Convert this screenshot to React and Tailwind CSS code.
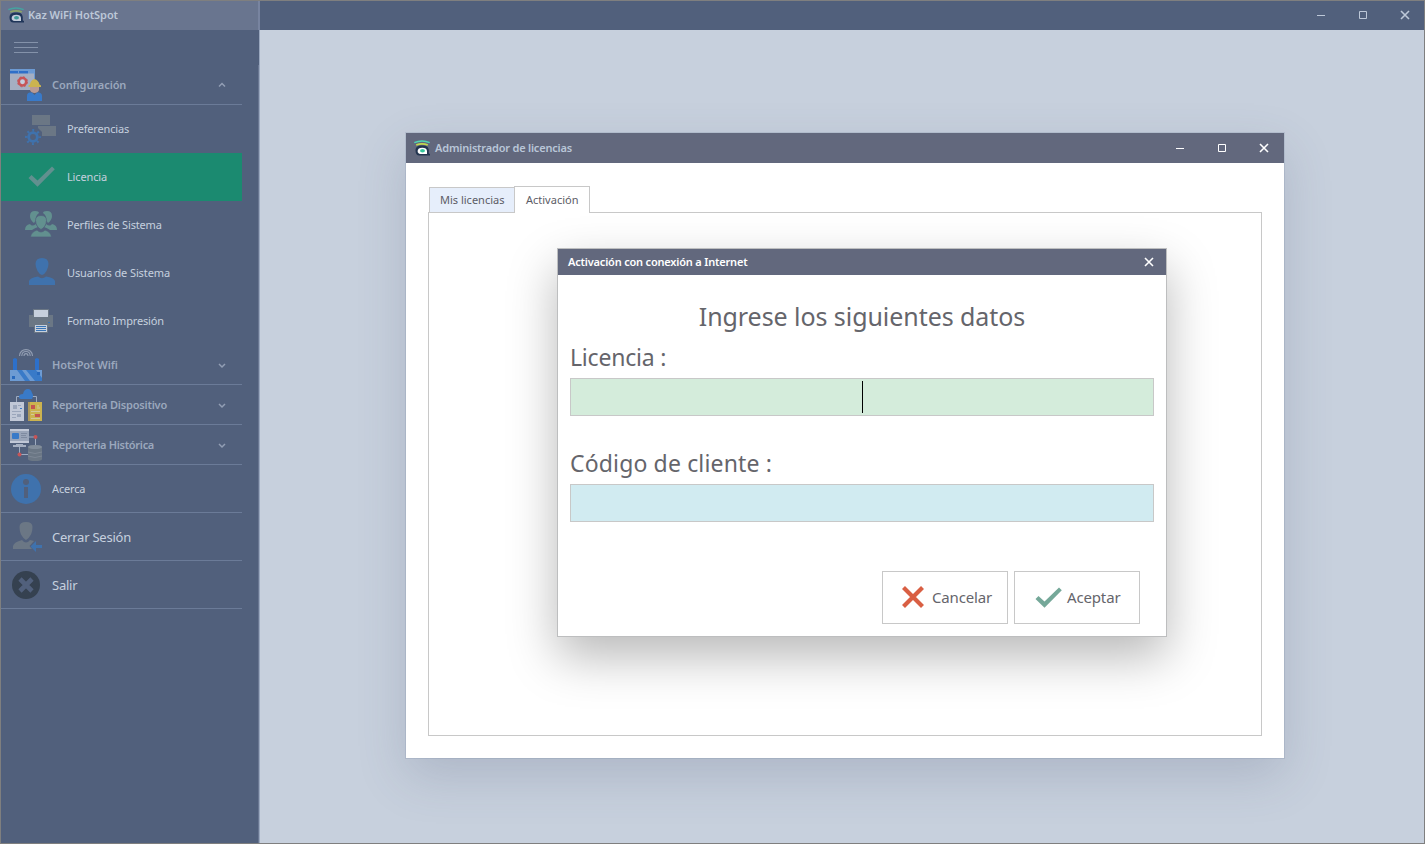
import React from "react";

function KazLogo({ dim = false }) {
  const c = dim
    ? { a: "#45a3a0", b: "#8da568", body: "#1f3559", w: "#c3ccda", dot: "#3f9a98" }
    : { a: "#4fd6b6", b: "#c3d84e", body: "#22344f", w: "#ffffff", dot: "#35c79c" };
  return (
    <svg className="h-4 w-4 shrink-0" viewBox="0 0 16 16" fill="none">
      <path d="M1.500 10.500C1.500 6.500 4.500 5.500 8 5.500S14.200 6 14.800 10V13.500L16 14V15.500H5.500C2.800 15.500 1.500 13.500 1.500 10.500Z" fill={c.body} />
      <path d="M.3 2.600Q8-.6 15.700 2.600" stroke={c.a} strokeWidth="1.500" />
      <path d="M2.200 5Q8 2.600 13.800 5" stroke={c.b} strokeWidth="1.700" />
      <path d="M3.600 11.100C3.600 8.800 5.500 7.700 8.300 7.700S12.800 8.700 13 11V14H6.500C4.500 14 3.600 12.700 3.600 11.100Z" fill={c.w} />
      <ellipse cx="8.500" cy="10.700" rx="2.500" ry="1.700" fill={c.dot} />
    </svg>
  );
}

function ConfigIcon() {
  return (
    <svg className="h-8 w-8" viewBox="0 0 32 32">
      <path d="M0 0H25V21H0Z" fill="#a5afc2" />
      <path d="M0 0H25V2H0Z" fill="#6c9ad3" />
      <path d="M0 2H18V4.500H0Z" fill="#2f6fc8" />
      <path d="M18 2H25V21H24V4.500H18Z" fill="#6c9ad3" />
      <path d="M8 2H9V4.500H8Z" fill="#6c9ad3" />
      <circle cx="12.500" cy="12.800" r="3.700" fill="#c5cddd" stroke="#c65457" strokeWidth="2.500" />
      <circle cx="12.500" cy="12.800" r="5" fill="none" stroke="#c65457" strokeWidth="1" strokeDasharray="2 1.930" />
      <path d="M20 17H29V21Q28 24 24.500 24T20 21Z" fill="#b99a94" />
      <path d="M18.500 18V16.500L20 15.500Q20.500 11 24.500 10Q28.500 11 29.500 15.500L31 16.500V18Z" fill="#cbb34f" />
      <path d="M17 32V27Q17 23.500 20 23.500H22L24.500 26L27 23.500H29Q32 24 32 27V32Z" fill="#397ac9" />
    </svg>
  );
}

function PreferencesIcon() {
  return (
    <svg className="h-8 w-8" viewBox="0 0 32 32">
      <path d="M7 2H25V12H7ZM13 13H31V23H17V19L13 15Z" fill="#6b7785" />
      <circle cx="8" cy="24" r="4.300" fill="#51607c" stroke="#3f72ad" strokeWidth="2.800" />
      <circle cx="8" cy="24" r="6.700" fill="none" stroke="#3f72ad" strokeWidth="2.600" strokeDasharray="1.900 3.362" strokeDashoffset=".95" />
    </svg>
  );
}

function CheckIcon({ color }) {
  return (
    <svg className="h-8 w-8 shrink-0" viewBox="0 0 32 32">
      <path d="M3.500 17L6.500 14L12.500 19.500L27 5.500L29.800 8.300L12.500 25.800Z" fill={color} />
    </svg>
  );
}

function GroupIcon() {
  return (
    <svg className="h-8 w-8" viewBox="0 0 32 32" fill="#62908f">
      <path d="M5 7Q5 2 10 2Q14 2 14 4Q10 7 11 11L9 14Q5 11 5 7ZM0 21Q0 16 5 15Q7 18 11 15Q12 18 13 18Q10 19 7 21Z" />
      <path d="M27 7Q27 2 22 2Q18 2 18 4Q22 7 21 11L23 14Q27 11 27 7ZM32 21Q32 16 27 15Q25 18 21 15Q20 18 19 18Q22 19 25 21Z" />
      <path d="M16 6.500Q21.500 6.500 21.500 11.500Q21 18 16 20.500Q11 18 10.500 11.500Q10.500 6.500 16 6.500ZM5.500 28Q6 23 12 21Q16 25 20 21Q26 23 26.500 28Z" stroke="#51607c" strokeWidth=".7" />
    </svg>
  );
}

function UserIcon() {
  return (
    <svg className="h-8 w-8" viewBox="0 0 32 32" fill="#3f72ad">
      <path d="M17 1Q23.500 1 23.500 7Q23.500 10 21.500 14Q19.500 17.500 17 18Q14.500 17.500 12.500 14Q10.500 10 10.500 7Q10.500 1 17 1ZM4 28V24Q5 20.500 13 19.500Q17 23 21 19.500Q29 20.500 30 24V28Z" />
    </svg>
  );
}

function PrinterIcon() {
  return (
    <svg className="h-8 w-8" viewBox="0 0 32 32">
      <path d="M4 10H8V4H24V10H28V22H23V28H9V22H4Z" fill="#6b7785" />
      <path d="M9 5H23V12H9ZM10 20H22V27H10Z" fill="#c7d0dd" />
      <path d="M11 21.500H21M11 23.500H21M11 25.500H21M23 17.500H25" stroke="#3974b5" />
    </svg>
  );
}

function RouterIcon() {
  return (
    <svg className="h-8 w-8" viewBox="0 0 32 32" fill="none">
      <path d="M9.500 7C9.500-1.500 22.500-1.500 22.500 7M11.800 7C12 1 20 1 20.200 7M14 7C14 3.800 18 3.800 18 7" stroke="#939eb3" strokeWidth="1.100" />
      <path d="M3 21V10L5 9L7 10V21ZM25 21V10L27 9L29 10V21Z" fill="#2d70ca" />
      <path d="M0 21H32V32H0Z" fill="#6d9bd3" />
      <path d="M7 21H12L20 32H15ZM16 21H26L32 29V32H25Z" fill="#397ac8" />
      <path d="M2 27H5V30H2ZM27 23H30V26H27Z" fill="#2869bd" />
    </svg>
  );
}

function DeviceReportIcon() {
  return (
    <svg className="h-8 w-8" viewBox="0 0 32 32" fill="none">
      <path d="M6.500 13V7.500H26.500V13" stroke="#9eabc0" />
      <path d="M9 8Q9 5 13 5Q14 0 18 0Q21 0 22 4Q24 6 22 10H12Q9 10 9 8Z" fill="#397ac8" />
      <path d="M0 13H14V32H0Z" fill="#c1c8d7" />
      <path d="M18 13H32V32H18Z" fill="#cbb34f" />
      <path d="M18 13H20V32H18Z" fill="#ad985b" />
      <path d="M3 16H7V20H3ZM7 25H11V28H7Z" fill="#9ba6bb" />
      <path d="M2 22.500H11M2 25.500H6M2 28.500H6M8 16.500H11" stroke="#9ba6bb" />
      <path d="M10 19.500H12" stroke="#397ac8" />
      <path d="M21 16H25V20H21ZM25 25H30V28H25Z" fill="#c4564f" />
      <path d="M27 17H29M27 19H30M21 22.500H30M21 25.500H24M21 29.500H30" stroke="#d2ca9a" />
    </svg>
  );
}

function HistoryReportIcon() {
  return (
    <svg className="h-8 w-8" viewBox="0 0 32 32" fill="none">
      <path d="M19 8H25.500V18M9.500 17V25.500H19" stroke="#9eabc0" />
      <path d="M0 0H19V14H0Z" fill="#c1c8d7" />
      <path d="M0 2H19V12H0Z" fill="#9aa5b9" />
      <rect x="2" y="4" width="7" height="6" rx="1" fill="#397ac8" />
      <path d="M11 4.500H17M11 6.500H16M11 8.500H17" stroke="#7f8ba1" />
      <path d="M6 15H13V16H16V18H3V16H6Z" fill="#a6b0c2" />
      <path d="M18 18Q18 16 25 16T32 18V30Q32 32 25 32T18 30Z" fill="#6b7785" />
      <ellipse cx="25" cy="18" rx="7" ry="2" fill="#828d9b" />
      <path d="M18 23Q25 26 32 23M18 27Q25 30 32 27" stroke="#818c99" strokeWidth=".8" />
      <circle cx="25.500" cy="8" r="2" fill="#c65457" />
      <circle cx="9.500" cy="25.500" r="2" fill="#c65457" />
    </svg>
  );
}

function InfoIcon() {
  return (
    <svg className="h-8 w-8" viewBox="0 0 32 32">
      <circle cx="16" cy="16" r="15" fill="#3f72ad" />
      <circle cx="16" cy="9" r="3" fill="#51607c" />
      <path d="M14 14H18V25H14Z" fill="#51607c" />
    </svg>
  );
}

function LogoutIcon() {
  return (
    <svg className="h-8 w-8" viewBox="0 0 32 32">
      <path d="M16 1Q22.500 1 22.500 6Q22.500 10 21 13.500Q18.500 18 16 19Q13.500 18 11 13.500Q9.500 10 9.500 6Q9.500 1 16 1ZM3 28V25Q4 21 12 19Q16 24 20 19L24 20L19.500 25L22 28Z" fill="#6b7785" />
      <path d="M20.500 25.500L26 20V24H32V27H26V31Z" fill="#3f72ad" />
    </svg>
  );
}

function ExitIcon() {
  return (
    <svg className="h-8 w-8" viewBox="0 0 32 32">
      <circle cx="16" cy="16" r="14" fill="#354150" />
      <path d="M10 10L22 22M22 10L10 22" stroke="#51607c" strokeWidth="4.600" />
    </svg>
  );
}

function CancelIcon() {
  return (
    <svg className="-mt-px h-8 w-8 shrink-0" viewBox="0 0 32 32">
      <path d="M6.500 6.500L25.500 25.500M25.500 6.500L6.500 25.500" stroke="#d95f43" strokeWidth="4.200" />
    </svg>
  );
}

function Minimize() {
  return (
    <svg className="h-3 w-3" viewBox="0 0 12 12" stroke="currentColor">
      <path d="M2 6.500H10" />
    </svg>
  );
}

function Maximize() {
  return (
    <svg className="h-3 w-3" viewBox="0 0 12 12" fill="none" stroke="currentColor">
      <path d="M2.500 2.500H9.500V9.500H2.500Z" />
    </svg>
  );
}

function Close() {
  return (
    <svg className="h-3 w-3" viewBox="0 0 12 12" stroke="currentColor" strokeWidth="1.600">
      <path d="M2 2L10 10M10 2L2 10" />
    </svg>
  );
}

function WindowButtons() {
  return (
    <div className="ml-auto flex gap-[30px]">
      <Minimize />
      <Maximize />
      <Close />
    </div>
  );
}

function Group({ icon, label, open = false, spacing }) {
  return (
    <div className="flex h-10 items-center border-b border-[#6b7b98] pl-[9px] pr-4">
      <div className="mt-px shrink-0">{icon}</div>
      <span className={`ml-[10px] whitespace-nowrap pt-[2px] text-[11px] font-semibold text-[#9ba8bd] ${spacing}`}>{label}</span>
      <svg className="ml-auto h-2 w-2" viewBox="0 0 8 8" fill="none" stroke="#929eb4" strokeWidth="1.500">
        <path d={open ? "M1 5.500L4 2.500L7 5.500" : "M1 3L4 6L7 3"} />
      </svg>
    </div>
  );
}

function SubItem({ icon, label, active = false, spacing }) {
  return (
    <div className={`flex h-12 items-center pl-6 ${active ? "bg-[#1b8a70]" : ""}`}>
      {icon}
      <span className={`ml-[10px] whitespace-nowrap text-[11px] text-[#c6d0df] ${spacing}`}>{label}</span>
    </div>
  );
}

function Item({ icon, label, text }) {
  return (
    <div className="flex h-12 items-center border-b border-[#6b7b98] pl-[9px]">
      {icon}
      <span className={`ml-[10px] whitespace-nowrap pt-[2px] text-[#c6d0df] ${text}`}>{label}</span>
    </div>
  );
}

function Sidebar() {
  return (
    <aside className="flex w-[259px] shrink-0 flex-col border-r border-[#9aa8bf] bg-[#51607c]">
      <div className="flex h-[35px] shrink-0 flex-col gap-1 pl-[13px] pt-3">
        <div className="h-px w-6 bg-[#8492aa]" />
        <div className="h-px w-6 bg-[#8492aa]" />
        <div className="h-px w-6 bg-[#8492aa]" />
      </div>
      <div className="flex-1 border-r border-[#6a7792]">
        <nav className="w-[241px]">
          <Group icon={<ConfigIcon />} label="Configuración" open spacing="tracking-[-0.08px]" />
          <SubItem icon={<PreferencesIcon />} label="Preferencias" spacing="tracking-[-0.17px]" />
          <SubItem icon={<CheckIcon color="#62908f" />} label="Licencia" active spacing="tracking-[-0.15px]" />
          <SubItem icon={<GroupIcon />} label="Perfiles de Sistema" spacing="tracking-[-0.16px]" />
          <SubItem icon={<UserIcon />} label="Usuarios de Sistema" spacing="tracking-[-0.11px]" />
          <SubItem icon={<PrinterIcon />} label="Formato Impresión" spacing="tracking-[-0.17px]" />
          <Group icon={<RouterIcon />} label="HotsPot Wifi" spacing="tracking-[-0.08px]" />
          <Group icon={<DeviceReportIcon />} label="Reporteria Dispositivo" spacing="tracking-[-0.19px]" />
          <Group icon={<HistoryReportIcon />} label="Reporteria Histórica" spacing="tracking-[-0.3px]" />
          <Item icon={<InfoIcon />} label="Acerca" text="text-[11px] tracking-[-0.15px]" />
          <Item icon={<LogoutIcon />} label="Cerrar Sesión" text="text-[13px] tracking-[-0.23px]" />
          <Item icon={<ExitIcon />} label="Salir" text="text-[13px] tracking-[-0.25px]" />
        </nav>
      </div>
    </aside>
  );
}

function ActivationDialog() {
  return (
    <section className="mx-auto h-[389px] w-[610px] border border-[#bdbebf] bg-white shadow-[0_20px_46px_rgba(0,0,0,0.28)]">
      <header className="flex h-[26px] items-center bg-[#62687d] pl-[10px] pr-[11px] text-white">
        <h2 className="whitespace-nowrap text-[11px] font-semibold tracking-[-0.19px]">Activación con conexión a Internet</h2>
        <div className="ml-auto"><Close /></div>
      </header>
      <div className="px-3 text-[#65656b]">
        <h3 className="pt-[22px] text-center text-[25px] leading-[38px] tracking-[-0.06px]">Ingrese los siguientes datos</h3>
        <label className="block h-[43px] whitespace-nowrap text-[23px] leading-[44px] tracking-[-0.2px]">Licencia :</label>
        <div className="flex h-[38px] justify-center border border-[#c8c8c8] bg-[#d4ecdb] pt-[2px]">
          <div className="ml-px h-8 w-px bg-black" />
        </div>
        <label className="block h-[68px] whitespace-nowrap pt-[25px] text-[23px] leading-[44px] tracking-[0.15px]">Código de cliente :</label>
        <div className="h-[38px] border border-[#c8c8c8] bg-[#d1ebf1]" />
        <div className="flex justify-end gap-[6px] pr-[14px] pt-[49px] text-[15px] tracking-[-0.15px]">
          <button className="flex h-[53px] w-[126px] items-center border border-[#c8c8c8] pl-[14px]">
            <CancelIcon />
            <span className="ml-[3px]">Cancelar</span>
          </button>
          <button className="flex h-[53px] w-[126px] items-center border border-[#c8c8c8] pl-[17px]">
            <CheckIcon color="#75a899" />
            <span className="ml-[3px]">Aceptar</span>
          </button>
        </div>
      </div>
    </section>
  );
}

function LicenseWindow() {
  return (
    <section className="ml-[146px] mt-[103px] h-[625px] w-[878px] bg-white shadow-[0_0_0_1px_rgba(90,110,140,0.15),0_18px_46px_rgba(70,80,110,0.2)]">
      <header className="flex h-[30px] items-center bg-[#62687d] pl-2 pr-[14px] text-white">
        <KazLogo />
        <h1 className="ml-[5px] whitespace-nowrap text-[11px] font-semibold tracking-[-0.2px] text-[#b9c6d8]">Administrador de licencias</h1>
        <WindowButtons />
      </header>
      <div className="px-[22px] pt-[23px]">
        <div className="relative z-10 flex items-end pl-px text-[11px] text-[#5c5c66]">
          <div className="h-[25px] w-[85px] whitespace-nowrap border border-b-0 border-r-0 border-[#c8c8c8] bg-[#e6eefb] pl-[10px] leading-[23px]">Mis licencias</div>
          <div className="-mb-px h-[27px] w-[76px] border border-b-0 border-[#c8c8c8] bg-white pl-[11px] leading-[25px]">Activación</div>
        </div>
        <div className="h-[524px] border border-[#c8c8c8] pt-[35px]">
          <div className="ml-[128px] w-[610px]"><ActivationDialog /></div>
        </div>
      </div>
    </section>
  );
}

export default function App() {
  return (
    <div className="flex h-[844px] w-[1425px] flex-col overflow-hidden border border-[#7f7f7f] bg-[#51607c] font-['Noto_Sans','Open_Sans',sans-serif]">
      <header className="flex h-[29px] shrink-0 bg-[#51607c] text-[#bdc8d8]">
        <div className="flex w-[259px] items-center border-r-2 border-[#7884a0] bg-[#69758f] pb-px pl-[7px]">
          <KazLogo dim />
          <span className="ml-1 whitespace-nowrap pt-px text-[11px] font-semibold tracking-[-0.06px]">Kaz WiFi HotSpot</span>
        </div>
        <div className="flex flex-1 pr-[13px] pt-2"><WindowButtons /></div>
      </header>
      <div className="flex min-h-0 flex-1">
        <Sidebar />
        <main className="flow-root flex-1 bg-[#c7d0dd]">
          <LicenseWindow />
        </main>
      </div>
    </div>
  );
}
